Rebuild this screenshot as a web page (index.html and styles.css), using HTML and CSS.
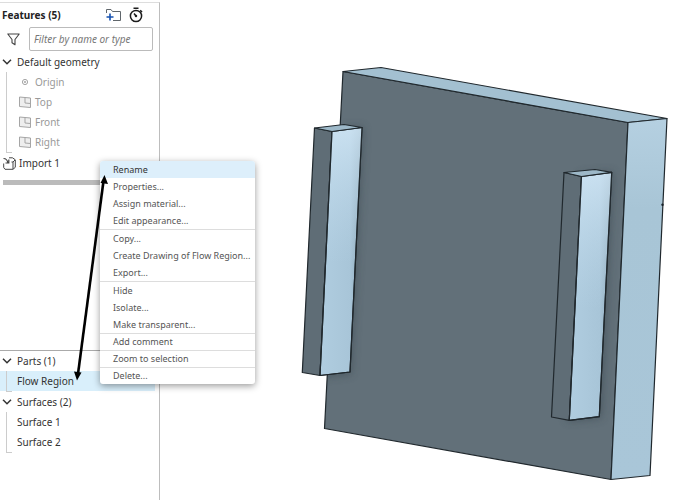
FILE: index.html
```html
<!DOCTYPE html>
<html lang="en">
<head>
<meta charset="utf-8">
<title>Part Studio</title>
<link rel="stylesheet" href="styles.css">
</head>
<body>
<div class="app">
  <aside class="panel">
    <section class="features">
      <header class="panel-head">
        <h1>Features (5)</h1>
        <button class="icon-btn" type="button" aria-label="Add folder">
          <svg width="16" height="14" viewBox="0 0 16 14" fill="none">
            <path d="M1.500 5V1.500h4.500l1.500 2h8v9H8" stroke="#60666b"/>
            <path d="M5 5.500v7M1.500 9h7" stroke="#1651b0" stroke-width="1.600"/>
          </svg>
        </button>
        <button class="icon-btn" type="button" aria-label="Regeneration times">
          <svg width="14" height="16" viewBox="0 0 14 16" fill="none" stroke="#1c1c1c" stroke-width="1.500">
            <circle cx="7" cy="9" r="5.600"/><path d="M4.500 1.200h5M11.200 3.300l1.800 1.800M7 9L5 6.500"/><circle cx="7" cy="9" r=".5"/>
          </svg>
        </button>
      </header>
      <div class="filter">
        <svg width="13" height="13" viewBox="0 0 13 13" fill="none" stroke="#444" stroke-width="1.100" stroke-linejoin="round"><path d="M.8 1h11.400L8 6.500v5.300L5 9.800V6.500z"/></svg>
        <input type="text" placeholder="Filter by name or type" aria-label="Filter by name or type">
      </div>
      <button class="row group" type="button"><svg class="chev" viewBox="0 0 10 6"><path d="M1 .8l4 4 4-4"/></svg>Default geometry</button>
      <ul class="branch muted">
        <li class="row"><svg class="glyph" viewBox="0 0 12 12"><circle cx="6" cy="6" r="2.600"/><circle cx="6" cy="6" r=".7"/></svg>Origin</li>
        <li class="row"><svg class="glyph" viewBox="0 0 12 12"><path class="plane" d="M.5 1l11 1v9.500l-11-1z"/><path d="M6 1.500v5.500l5.500.5"/></svg>Top</li>
        <li class="row"><svg class="glyph" viewBox="0 0 12 12"><path class="plane" d="M.5 1l11 1v9.500l-11-1z"/><path d="M6 1.500v5.500l5.500.5"/></svg>Front</li>
        <li class="row"><svg class="glyph" viewBox="0 0 12 12"><path class="plane" d="M.5 1l11 1v9.500l-11-1z"/><path d="M6 1.500v5.500l5.500.5"/></svg>Right</li>
      </ul>
      <div class="row import"><svg width="13" height="13" viewBox="0 0 13 13" fill="none" stroke="#454545"><path d="M6 .8H9.500l2.800 2v7.500L10 12.300H2L.7 10.500V6.500M10 12V5l2-2M10 5H8.500"/><path d="M.5 1.500c2.500 0 4 1.500 4.500 5M2.500 6h3.300V2.500" stroke-width="1.200"/></svg>Import 1</div>
      <div class="rollback"></div>
    </section>
    <section class="parts">
      <button class="row group" type="button"><svg class="chev" viewBox="0 0 10 6"><path d="M1 .8l4 4 4-4"/></svg>Parts (1)</button>
      <ul class="branch">
        <li class="row selected">Flow Region</li>
      </ul>
      <button class="row group" type="button"><svg class="chev" viewBox="0 0 10 6"><path d="M1 .8l4 4 4-4"/></svg>Surfaces (2)</button>
      <ul class="branch">
        <li class="row">Surface 1</li>
        <li class="row">Surface 2</li>
      </ul>
    </section>
  </aside>

  <main class="viewport">
    <svg class="model" viewBox="160 0 515 500" role="img" aria-label="Plate with two bars">
      <defs>
        <linearGradient id="barLit" x1="0" y1="0" x2="1" y2="0"><stop offset="0" stop-color="#b0cde0"/><stop offset=".72" stop-color="#a8c5d8"/><stop offset="1" stop-color="#8ba5b5"/></linearGradient>
        <linearGradient id="shine" x1="0" y1="0" x2="0" y2="1"><stop offset="0" stop-color="#d4e9f8" stop-opacity=".75"/><stop offset=".55" stop-color="#c0dbed" stop-opacity="0"/></linearGradient>
        <linearGradient id="side" x1="0" y1="0" x2="0" y2="1"><stop offset="0" stop-color="#b5d0e1"/><stop offset=".25" stop-color="#a8c5d6"/><stop offset="1" stop-color="#a9c6d8"/></linearGradient>
        <filter id="soft" x="-100%" y="-10%" width="300%" height="120%"><feGaussianBlur stdDeviation="4"/></filter>
        <clipPath id="front"><path d="M343 71.500L628 122.500 611 479.500 324.500 428.500z"/></clipPath>
      </defs>
      <path d="M343 71.500L628 122.500 611 479.500 324.500 428.500z" fill="#627079"/>
      <g clip-path="url(#front)">
        <path d="M331 130L362 128 350 373 320 376zM581 175L612 173 600 417 568 420z" fill="#3e4b53" stroke="#3e4b53" stroke-width="2" opacity=".65" filter="url(#soft)"/>
      </g>
      <g stroke="#20282d" stroke-width="1.200" stroke-linejoin="round">
        <path d="M343 71.500L628 122.500 611 479.500 324.500 428.500z" fill="none"/>
        <path d="M343 71.500L381 67.500 667 118.500 628 122.500z" fill="#a3c0d1"/>
        <path d="M628 122.500L667 118.500 650 475.500 611 479.500z" fill="url(#side)"/>
        <path d="M314.500 128L332 131.500 320 375.500 302.300 372.500z" fill="#5f6d76"/>
        <path d="M332 131.500L362 127.500 350 372 320 375.500z" fill="url(#barLit)"/>
        <path d="M332 131.500L362 127.500 350 372 320 375.500z" fill="url(#shine)"/>
        <path d="M314.500 128L344 124.500 362 127.500 332 131.500z" fill="#9db8c8"/>
        <path d="M564 172.500L581.500 176.500 569.300 420.300 551.500 417z" fill="#5f6d76"/>
        <path d="M581.500 176.500L611.700 172.300 599.300 416.700 569.300 420.300z" fill="url(#barLit)"/>
        <path d="M581.500 176.500L611.700 172.300 599.300 416.700 569.300 420.300z" fill="url(#shine)"/>
        <path d="M564 172.500L595 169.500 611.700 172.300 581.500 176.500z" fill="#9db8c8"/>
      </g>
      <circle cx="662.500" cy="204.800" r="1.200" fill="#182028"/>
    </svg>
  </main>

  <div class="menu" role="menu">
    <div class="menu-group">
      <button type="button" role="menuitem" class="active">Rename</button>
      <button type="button" role="menuitem">Properties...</button>
      <button type="button" role="menuitem">Assign material...</button>
      <button type="button" role="menuitem">Edit appearance...</button>
    </div>
    <div class="menu-group">
      <button type="button" role="menuitem">Copy...</button>
      <button type="button" role="menuitem">Create Drawing of Flow Region...</button>
      <button type="button" role="menuitem">Export...</button>
    </div>
    <div class="menu-group">
      <button type="button" role="menuitem">Hide</button>
      <button type="button" role="menuitem">Isolate...</button>
      <button type="button" role="menuitem">Make transparent...</button>
    </div>
    <div class="menu-group single"><button type="button" role="menuitem">Add comment</button></div>
    <div class="menu-group single"><button type="button" role="menuitem">Zoom to selection</button></div>
    <div class="menu-group single"><button type="button" role="menuitem">Delete...</button></div>
  </div>

  <svg class="arrow" width="40" height="210" viewBox="70 173 40 210" aria-hidden="true">
    <path d="M103.500 181L78 374" stroke="#000" stroke-width="2.600"/>
    <path d="M104.500 175l3.500 9-7.500-1zM77 380.500l-3-9 7.500 1z"/>
  </svg>
</div>
</body>
</html>
```
FILE: styles.css
```css
* { box-sizing: border-box; }
body {
  margin: 0;
  background: #fff;
  color: #333;
  font: 10px/20px "Noto Sans", "Liberation Sans", sans-serif;
}
button { border: 0; padding: 0; background: none; font: inherit; color: inherit; text-align: left; }
ul { margin: 0; padding: 0; list-style: none; }

.app {
  position: relative;
  display: grid;
  grid-template-columns: 160px 1fr;
  min-height: 100vh;
}
.panel {
  display: flex;
  flex-direction: column;
  margin-top: 2px;
  border-top: 1px solid #ddd;
  border-right: 1px solid #bdbdbd;
}
.features { flex: 1; }
.panel-head {
  display: flex;
  align-items: center;
  gap: 8px;
  height: 24px;
  padding: 0 16px 0 2px;
}
.panel-head h1 { flex: 1; margin: 0; font-size: 10px; font-weight: 700; color: #222; }
.icon-btn { display: flex; }
.filter {
  display: flex;
  align-items: center;
  gap: 9px;
  padding: 0 6px 1px 7px;
}
.filter input {
  flex: 1;
  min-width: 0;
  height: 24px;
  padding: 0 4px;
  border: 1px solid #bbb;
  border-radius: 2px;
  font: italic 10px "Noto Sans", "Liberation Sans", sans-serif;
}
.filter input::placeholder { color: #777; }

.row { display: flex; align-items: center; width: 100%; height: 20px; }
.group { gap: 5px; padding-left: 2px; }
.chev { width: 10px; height: 6px; fill: none; stroke: #333; stroke-width: 1.5; }
.branch { position: relative; padding-bottom: 1px; }
.branch .row { padding-left: 17px; }
.branch::before {
  content: "";
  position: absolute;
  top: 0;
  bottom: 0;
  left: 6px;
  width: 5px;
  border-left: 1px solid #ccc;
  border-bottom: 1px solid #ccc;
}
.muted { color: #999; }
.muted .row { gap: 4px; padding-left: 19px; }
.glyph { width: 12px; height: 12px; fill: none; stroke: #a5a5a5; }
.plane { fill: #eee; }
.import { gap: 3px; padding-left: 3px; }
.rollback { height: 5px; margin: 7px 6px 0 3px; background: #bbb; }

.parts { min-height: 150px; border-top: 1px solid #aaa; }
.selected { width: auto; margin-right: 4px; background: #d9effb; }

.viewport { min-width: 0; }
.model { display: block; width: 100%; }

.menu {
  position: absolute;
  left: 100px;
  top: 161px;
  width: 155px;
  overflow: hidden;
  border-radius: 3px;
  background: #fff;
  box-shadow: 0 2px 7px rgba(0, 0, 0, .4);
  font-size: 9px;
  line-height: 17px;
  color: #555;
}
.menu-group + .menu-group { border-top: 1px solid #ddd; }
.menu button { display: block; width: 100%; height: 17px; padding-left: 13px; white-space: nowrap; }
.menu .single button { height: 16px; line-height: 16px; }
.menu .active { background: #ddeffb; color: #333; }
.arrow { position: absolute; left: 70px; top: 173px; }
```
